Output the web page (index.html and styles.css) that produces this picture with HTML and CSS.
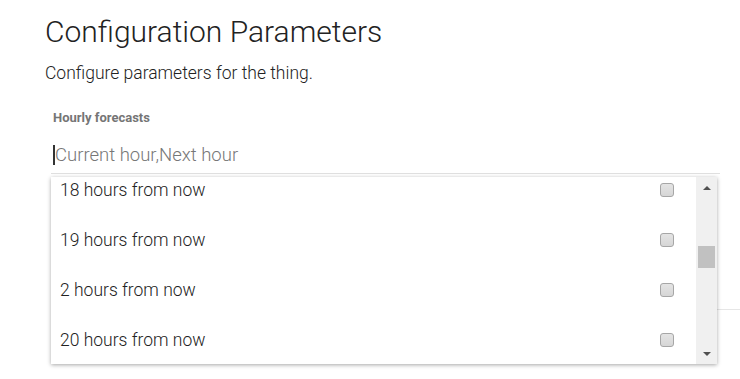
FILE: index.html
```html
<html>
<head>
  <meta name="viewport" content="width=device-width, initial-scale=1">
  <title>Configuration Parameters</title>
  <link rel="stylesheet" href="styles.css">
</head>
<body>
  <div class="page">
    <h1 class="title">Configuration Parameters</h1>
    <p class="subtitle">Configure parameters for the thing.</p>

    <div class="field">
      <label class="field-label">Hourly forecasts</label>
      <div class="input-wrap">
        <span class="caret"></span>
        <span class="placeholder">Current hour,Next hour</span>

        <div class="dropdown">
          <div class="options">
            <div class="options-inner">
              <div class="option"><span>18 hours from now</span><span class="check"></span></div>
              <div class="option"><span>19 hours from now</span><span class="check"></span></div>
              <div class="option"><span>2 hours from now</span><span class="check"></span></div>
              <div class="option"><span>20 hours from now</span><span class="check"></span></div>
            </div>
          </div>
          <div class="scrollbar">
            <div class="arrow arrow-up"></div>
            <div class="track"><div class="thumb"></div></div>
            <div class="arrow arrow-down"></div>
          </div>
        </div>
      </div>
    </div>

    <!-- siguiente campo, tapado por el menu -->
    <div class="field-next"></div>
  </div>
</body>
</html>
```

FILE: styles.css
```css
body {
  margin: 0;
  background-color: #fff;
  font-family: Roboto, "Liberation Sans", sans-serif;
  color: #222;
}

.page {
  padding: 14px 0 0 45px;
}

.title {
  margin: 0;
  font-size: 30px;
  line-height: 36px;
  font-weight: 300;
  color: #222;
}

.subtitle {
  margin: 13px 0 0;
  font-size: 17.5px;
  line-height: 20px;
  font-weight: 300;
  color: #222;
}

/* campo */
.field {
  margin: 27px 0 0 6px;
  width: 669px;
}

.field-label {
  display: block;
  padding-left: 2px;
  font-size: 13px;
  line-height: 15px;
  font-weight: bold;
  color: #757575;
}

.input-wrap {
  position: relative;
  display: flex;
  align-items: center;
  margin-top: 18px;
  padding: 0 0 6px 2px;
  height: 24px;
  border-bottom: 1px solid #e0e0e0;
}

.caret {
  width: 2px;
  height: 20px;
  background-color: #333;
}

.placeholder {
  font-size: 18.5px;
  line-height: 24px;
  font-weight: 300;
  color: #777;
}

/* menu desplegable */
.dropdown {
  position: absolute;
  top: calc(100% + 4px);
  left: 0;
  width: 666px;
  height: 187px;
  display: flex;
  background-color: #fff;
  box-shadow: 0 1px 4px rgba(0, 0, 0, 0.35);
  z-index: 2;
}

.options {
  flex: 1;
  overflow: hidden;
}

.options-inner {
  margin-top: -12px;
}

.option {
  height: 50px;
  display: flex;
  align-items: center;
  justify-content: space-between;
  padding: 0 22px 0 9px;
  font-size: 17.5px;
  font-weight: 300;
  color: #222;
}

.check {
  width: 12px;
  height: 12px;
  border: 1px solid #a6a6a6;
  border-radius: 3px;
  background: linear-gradient(#e4e4e4, #d6d6d6);
}

/* barra de desplazamiento */
.scrollbar {
  width: 21px;
  display: flex;
  flex-direction: column;
  background-color: #f0f0f0;
}

.arrow {
  height: 21px;
  display: flex;
  align-items: center;
  justify-content: center;
}

.arrow-up::before {
  content: "";
  border-left: 4px solid transparent;
  border-right: 4px solid transparent;
  border-bottom: 4px solid #505050;
}

.arrow-down::before {
  content: "";
  border-left: 4px solid transparent;
  border-right: 4px solid transparent;
  border-top: 4px solid #505050;
}

.track {
  flex: 1;
  padding: 48px 2px 0;
}

.thumb {
  height: 22px;
  background-color: #c1c1c1;
}

.field-next {
  margin-left: 6px;
  height: 135px;
  border-bottom: 1px solid #e6e6e6;
}
```
